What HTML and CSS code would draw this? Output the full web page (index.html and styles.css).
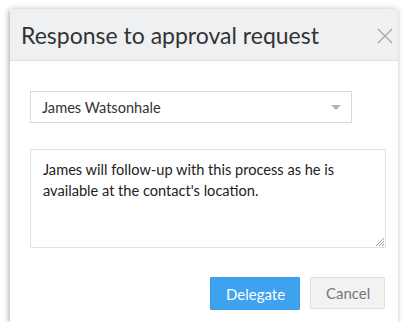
FILE: index.html
```html
<!DOCTYPE html>
<html lang="en">
<head>
  <meta charset="UTF-8" />
  <title>Response to approval request</title>
  <link rel="stylesheet" href="styles.css">
</head>
<body>
  <div class="dialog">
    <div class="dialog-header">
      <h2>Response to approval request</h2>
      <span class="close">
        <svg width="16" height="16" viewBox="0 0 16 16"><path d="M1 1L15 15M15 1L1 15" stroke="#a5a7aa" stroke-width="1.3" fill="none"/></svg>
      </span>
    </div>
    <div class="dialog-body">
      <div class="select">
        <span>James Watsonhale</span>
        <span class="caret"></span>
      </div>
      <div class="textarea">
        James will follow-up with this process as he is available at the contact's location.
        <svg class="grip" width="9" height="9" viewBox="0 0 9 9"><path d="M9 1L1 9M9 4L4 9M9 7L7 9" stroke="#999" stroke-width="1" fill="none"/></svg>
      </div>
    </div>
    <div class="dialog-footer">
      <button class="btn primary">Delegate</button>
      <button class="btn">Cancel</button>
    </div>
  </div>
</body>
</html>
```

FILE: styles.css
```css
body {
  margin: 0;
  background: #fff;
  font-family: 'Lato', 'Liberation Sans', sans-serif;
  color: #222;
}

.dialog {
  margin: 9px 0 0 10px;
  width: 388px;
  height: 313px;
  background: #fff;
  box-shadow: -1px 1px 6px rgba(0, 0, 0, 0.35);
  display: flex;
  flex-direction: column;
}

.dialog-header {
  height: 51px;
  background: #eff0f2;
  border-bottom: 1px solid #dcdee0;
  display: flex;
  align-items: center;
  justify-content: space-between;
  padding: 0 5px 0 11px;
}

.dialog-header h2 {
  margin: 0;
  font-weight: normal;
  font-size: 23px;
  color: #333;
}

.close {
  display: flex;
  margin-top: 2px;
}

.dialog-body {
  padding: 30px 12px 0 20px;
}

.select {
  width: 322px;
  height: 32px;
  border: 1px solid #d9d9d9;
  display: flex;
  align-items: center;
  justify-content: space-between;
  padding: 0 10px 0 11px;
  box-sizing: border-box;
  font-size: 14.6px;
  color: #333;
}

.caret {
  width: 0;
  height: 0;
  border-left: 5px solid transparent;
  border-right: 5px solid transparent;
  border-top: 5px solid #b5b5b5;
}

.textarea {
  position: relative;
  margin-top: 26px;
  height: 99px;
  box-sizing: border-box;
  border: 1px solid #dfe3e6;
  padding: 9px 12px;
  font-size: 14.6px;
  line-height: 21px;
  color: #222;
}

.grip {
  position: absolute;
  right: 1px;
  bottom: 1px;
}

.dialog-footer {
  margin-top: auto;
  display: flex;
  justify-content: flex-end;
  gap: 10px;
  padding: 0 13px 12px 0;
}

.btn {
  font-family: inherit;
  font-size: 15px;
  height: 32px;
  padding: 0 15px;
  border: 1px solid #dedede;
  background: #f2f2f2;
  color: #777;
  border-radius: 1px;
}

.btn.primary {
  width: 90px;
  background: #3ea2ef;
  border-color: #3a9ae6;
  color: #fff;
  height: 33px;
}

.btn:not(.primary) {
  width: 75px;
}
```
